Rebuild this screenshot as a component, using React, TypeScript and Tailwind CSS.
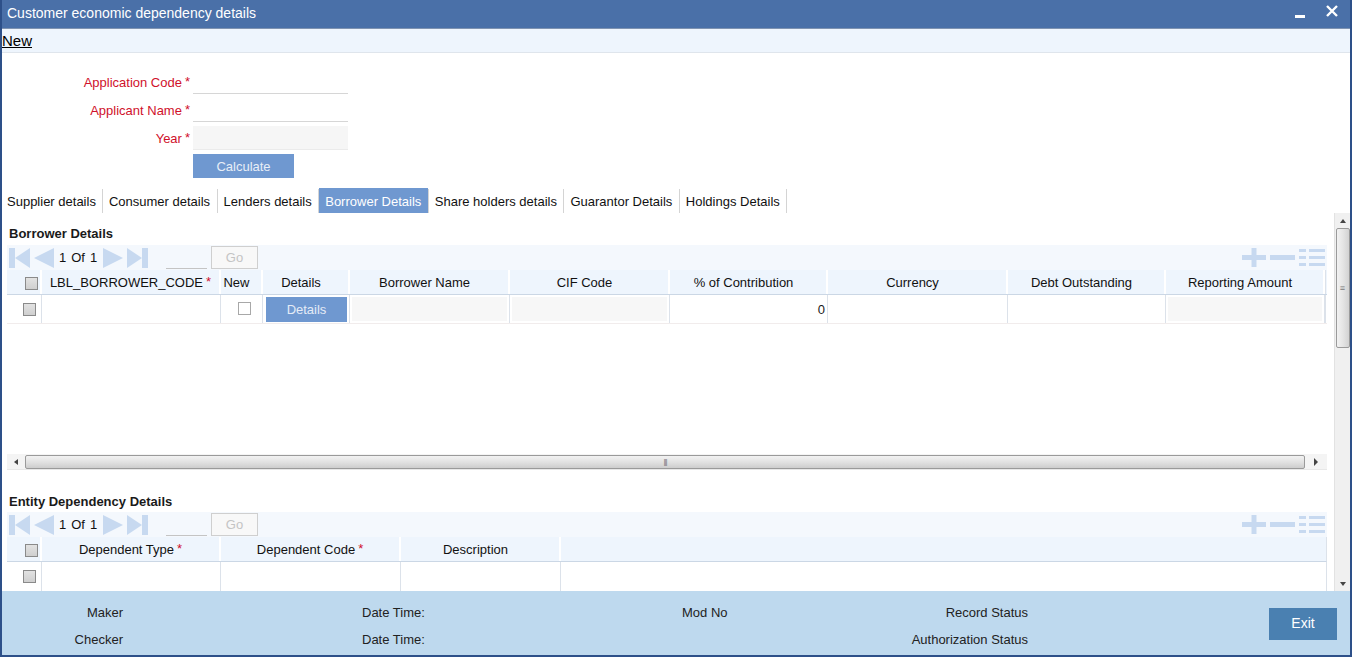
import React from "react";

const LIGHT = "#c7d9f0";

function Checkbox({ white = false }: { white?: boolean }) {
  return (
    <span
      className={`inline-block w-[13px] h-[13px] border ${
        white ? "bg-white border-[#a8a8a8]" : "bg-gradient-to-b from-[#e2e2e2] to-[#cfcfcf] border-[#8a8a8a]"
      }`}
    />
  );
}

function Pager() {
  return (
    <div className="flex items-center h-full">
      <svg width="22" height="20" viewBox="0 0 22 20" className="ml-[2px]">
        <rect x="0" y="0" width="6" height="20" fill={LIGHT} />
        <polygon points="21,0 21,20 6,10" fill={LIGHT} />
      </svg>
      <svg width="20" height="20" viewBox="0 0 20 20" className="ml-[3px]">
        <polygon points="20,0 20,20 0,10" fill={LIGHT} />
      </svg>
      <span className="ml-[5px] text-[13px] text-[#111] w-[39px] flex gap-[5px] whitespace-nowrap">
        <span>1</span>
        <span>Of</span>
        <span>1</span>
      </span>
      <svg width="20" height="20" viewBox="0 0 20 20" className="ml-[5px]">
        <polygon points="0,0 0,20 20,10" fill={LIGHT} />
      </svg>
      <svg width="22" height="20" viewBox="0 0 22 20" className="ml-[4px]">
        <polygon points="0,0 0,20 15,10" fill={LIGHT} />
        <rect x="15" y="0" width="6" height="20" fill={LIGHT} />
      </svg>
      <span className="ml-[17px] w-[41px] h-[20px] mt-[3px] border-b border-[#c4c4c4]" />
      <span className="ml-[4px] w-[47px] h-[23px] border border-[#cfcfcf] bg-[#f8f8f8] text-[13px] text-[#c4c4c4] flex items-center justify-center">
        Go
      </span>
    </div>
  );
}

function ToolIcons() {
  return (
    <div className="flex items-center gap-[4px] pr-[2px]">
      <svg width="24" height="19" viewBox="0 0 24 19">
        <rect x="0" y="7" width="24" height="5" fill={LIGHT} />
        <rect x="9.5" y="0" width="5" height="19" fill={LIGHT} />
      </svg>
      <svg width="25" height="19" viewBox="0 0 25 19">
        <rect x="0" y="7" width="25" height="5" fill={LIGHT} />
      </svg>
      <svg width="26" height="19" viewBox="0 0 26 19">
        <rect x="0" y="1" width="7" height="3" fill={LIGHT} />
        <rect x="10" y="1" width="16" height="3" fill={LIGHT} />
        <rect x="0" y="8" width="7" height="3" fill={LIGHT} />
        <rect x="10" y="8" width="16" height="3" fill={LIGHT} />
        <rect x="0" y="15" width="7" height="3" fill={LIGHT} />
        <rect x="10" y="15" width="16" height="3" fill={LIGHT} />
      </svg>
    </div>
  );
}

function Toolbar() {
  return (
    <div className="h-[25px] w-[1320px] bg-[#f4f8fd] flex items-center justify-between">
      <Pager />
      <ToolIcons />
    </div>
  );
}

function Req() {
  return <span className="text-[#d0112b] ml-[3px] relative top-[-1px]">*</span>;
}

function Head({ w, pr = 9, children }: { w: number; pr?: number; children?: React.ReactNode }) {
  return (
    <div
      className="h-full flex items-center justify-center pt-px shrink-0 border-r-2 border-white"
      style={{ width: w, paddingRight: pr }}
    >
      {children}
    </div>
  );
}

function CheckHead() {
  return (
    <div className="h-full w-[35px] shrink-0 flex items-center justify-end pr-[2px] pt-[3px] border-r-2 border-white">
      <Checkbox />
    </div>
  );
}

function Cell({ w, children, className = "" }: { w: number; children?: React.ReactNode; className?: string }) {
  return (
    <div className={`h-full shrink-0 border-r border-[#dce2ea] flex items-center ${className}`} style={{ width: w }}>
      {children}
    </div>
  );
}

function FieldBox() {
  return <div className="mx-[2px] h-[24px] w-full bg-[#f7f7f7]" />;
}

const tabs = [
  "Supplier details",
  "Consumer details",
  "Lenders details",
  "Borrower Details",
  "Share holders details",
  "Guarantor Details",
  "Holdings Details",
];

export default function App() {
  return (
    <div className="w-[1352px] h-[657px] overflow-hidden bg-white flex flex-col border-x-2 border-b-2 border-[#2d5089] font-['Liberation_Sans',Arial,sans-serif] text-[13px] text-[#1a1a1a]">
      {/* title bar */}
      <div className="h-[29px] shrink-0 bg-[#4a70a8] border-b border-[#7f93b1] flex items-center justify-between -mx-[2px] px-[7px] pb-[2px]">
        <span className="text-[14px] text-white">Customer economic dependency details</span>
        <div className="flex items-center gap-[21px] pr-[7px]">
          <span className="block w-[10px] h-[3px] bg-white mt-[7px]" />
          <svg width="12" height="12" viewBox="0 0 12 12" className="mb-[5px]">
            <path d="M1 1 L11 11 M11 1 L1 11" stroke="white" strokeWidth="2.4" />
          </svg>
        </div>
      </div>

      {/* New bar */}
      <div className="h-[24px] shrink-0 bg-[#eef5fd] border-b border-[#dfe5ec] flex items-center">
        <span className="text-[15px] text-black underline leading-none">New</span>
      </div>

      {/* form */}
      <div className="h-[135px] shrink-0 pt-[17px] flex flex-col gap-[4px]">
        {[
          { l: "Application Code", bg: "bg-white border-[#d6d6d6]" },
          { l: "Applicant Name", bg: "bg-white border-[#d6d6d6]" },
          { l: "Year", bg: "bg-[#f6f6f6] border-[#ebebeb]" },
        ].map((f) => (
          <div key={f.l} className="h-[24px] flex items-center">
            <div className="w-[191px] text-right text-[#d0112b] pr-[3px] pt-[2px]">
              {f.l}
              <Req />
            </div>
            <div className={`w-[155px] h-[24px] border-b ${f.bg}`} />
          </div>
        ))}
        <div className="h-[24px] flex">
          <div className="ml-[191px] w-[101px] h-[24px] pt-px bg-[#6f98d0] text-[#e8eef7] flex items-center justify-center">
            Calculate
          </div>
        </div>
      </div>

      {/* tabs */}
      <div className="h-[25px] shrink-0 flex pl-[5px]">
        {tabs.map((t, i) => (
          <div key={t} className="flex h-full">
            <div
              className={`h-full flex items-center pt-[2px] ${i === 0 ? "pr-[6px]" : "pl-[6px] pr-[6.5px]"} ${
                t === "Borrower Details" ? "bg-[#6f98d0] text-white" : "text-[#111]"
              }`}
            >
              {t}
            </div>
            <div className="w-px h-[24px] mt-px bg-[#d4d4d4]" />
          </div>
        ))}
      </div>

      {/* scroll region */}
      <div className="h-[378px] shrink-0 flex overflow-hidden">
        <div className="flex-1 pl-[5px] overflow-hidden">
          <div className="h-[32px] pt-[11px] pl-[2px] font-bold leading-[20px]">Borrower Details</div>
          <Toolbar />
          {/* table 1 header */}
          <div className="h-[25px] w-[1320px] bg-[#eef5fd] border-b border-[#cbd7e5] flex text-[#111]">
            <CheckHead />
            <Head w={179} pr={0}>
              LBL_BORROWER_CODE
              <Req />
            </Head>
            <Head w={42}>New</Head>
            <Head w={87}>Details</Head>
            <Head w={160}>Borrower Name</Head>
            <Head w={160}>CIF Code</Head>
            <Head w={158}>% of Contribution</Head>
            <Head w={180}>Currency</Head>
            <Head w={158}>Debt Outstanding</Head>
            <Head w={159}>Reporting Amount</Head>
            <div className="flex-1 border-l border-[#dce2ea]" />
          </div>
          {/* table 1 row */}
          <div className="h-[29px] w-[1320px] flex border-b border-[#f1ecec]">
            <Cell w={35} className="justify-end pr-[5px]">
              <Checkbox />
            </Cell>
            <Cell w={179} />
            <Cell w={42} className="justify-center pl-[6px]">
              <span className="flex mb-[2px]"><Checkbox white /></span>
            </Cell>
            <Cell w={87} className="pl-[3px] pr-[2px]">
              <div className="w-[81px] h-[25px] pt-px bg-[#6f98d0] text-[#e4ebf6] flex items-center justify-center">
                Details
              </div>
            </Cell>
            <Cell w={160}>
              <FieldBox />
            </Cell>
            <Cell w={160}>
              <FieldBox />
            </Cell>
            <Cell w={158} className="justify-end pr-[2px] pt-px">
              0
            </Cell>
            <Cell w={180} />
            <Cell w={158} />
            <Cell w={159}>
              <FieldBox />
            </Cell>
            <div className="flex-1 border-l border-[#dce2ea]" />
          </div>
          <div className="h-[130px]" />
          {/* horizontal scrollbar */}
          <div className="h-[16px] w-[1320px] bg-[#f4f4f4] border-b border-[#e8e8e8] flex items-center">
            <div className="w-[18px] flex items-center justify-center">
              <span className="block w-0 h-0 border-y-[3px] border-y-transparent border-r-[4px] border-r-[#444]" />
            </div>
            <div className="flex-1 h-[14px] rounded-[2px] border border-[#9a9a9a] bg-gradient-to-b from-[#f2f2f2] via-[#e2e2e2] to-[#cdcdcd] flex items-center justify-center">
              <span className="text-[8px] leading-none text-[#777] tracking-[-1px]">|||</span>
            </div>
            <div className="w-[22px] flex items-center justify-center">
              <span className="block w-0 h-0 border-y-[4px] border-y-transparent border-l-[4px] border-l-[#444]" />
            </div>
          </div>

          <div className="h-[42px] pt-[22px] pl-[2px] font-bold leading-[20px]">Entity Dependency Details</div>
          <Toolbar />
          {/* table 2 header */}
          <div className="h-[25px] w-[1320px] bg-[#eef5fd] border-b border-[#cbd7e5] border-r border-r-[#dce2ea] flex text-[#111]">
            <CheckHead />
            <Head w={179} pr={0}>
              Dependent Type
              <Req />
            </Head>
            <Head w={180} pr={0}>
              Dependent Code
              <Req />
            </Head>
            <Head w={160}>Description</Head>
            <div className="flex-1" />
          </div>
          <div className="h-[29px] w-[1320px] flex border-r border-[#dce2ea]">
            <Cell w={35} className="justify-end pr-[5px]">
              <Checkbox />
            </Cell>
            <Cell w={179} />
            <Cell w={180} />
            <Cell w={160} />
            <div className="flex-1" />
          </div>
        </div>

        {/* vertical scrollbar */}
        <div className="w-[16px] shrink-0 bg-[#f0f0f0] border-l border-[#e2e2e2] flex flex-col items-center">
          <div className="h-[15px] flex items-center justify-center">
            <span className="block w-0 h-0 border-x-[3px] border-x-transparent border-b-[4px] border-b-[#444]" />
          </div>
          <div className="w-[14px] h-[120px] rounded-[2px] border border-[#9a9a9a] bg-gradient-to-r from-[#f2f2f2] via-[#e4e4e4] to-[#d2d2d2] flex items-center justify-center">
            <span className="text-[9px] leading-none text-[#777]">≡</span>
          </div>
          <div className="flex-1" />
          <div className="h-[14px] flex items-center justify-center">
            <span className="block w-0 h-0 border-x-[3px] border-x-transparent border-t-[4px] border-t-[#444]" />
          </div>
        </div>
      </div>

      {/* footer */}
      <div className="h-[64px] shrink-0 bg-[#bed9ee] flex items-center text-[#222]">
        <div className="flex-1 flex flex-col self-start pt-[8px]">
          <div className="h-[27px] flex items-center">
            <div className="w-[121px] text-right">Maker</div>
            <div className="w-[239px]" />
            <div className="w-[320px]">Date Time:</div>
            <div className="w-[346px] flex justify-between">
              <span>Mod No</span>
              <span>Record Status</span>
            </div>
          </div>
          <div className="h-[27px] flex items-center">
            <div className="w-[121px] text-right">Checker</div>
            <div className="w-[239px]" />
            <div className="w-[320px]">Date Time:</div>
            <div className="w-[346px] text-right">Authorization Status</div>
          </div>
        </div>
        <div className="w-[68px] h-[32px] bg-[#4a80b1] text-white text-[14px] flex items-center justify-center mr-[13px] mt-[1px]">
          Exit
        </div>
      </div>
    </div>
  );
}
